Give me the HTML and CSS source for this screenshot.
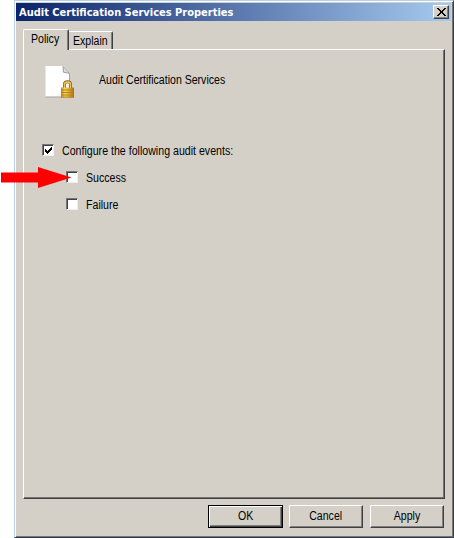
FILE: index.html
```html
<!DOCTYPE html>
<html lang="en">
<head>
<meta charset="utf-8">
<title>Audit Certification Services Properties</title>
<link rel="stylesheet" href="styles.css">
</head>
<body>
<main class="window">
  <header class="titlebar">
    <h1 class="title"><span class="t">Audit Certification Services Properties</span></h1>
    <button class="close" aria-label="Close"><svg width="9" height="8" viewBox="0 0 9 8" shape-rendering="crispEdges"><path d="M0 0h2v1h1v1h1v1h1v-1h1v-1h1v-1h2v1h-1v1h-1v1h-1v2h1v1h1v1h1v1h-2v-1h-1v-1h-1v-1h-1v1h-1v1h-1v1h-2v-1h1v-1h1v-1h1v-2h-1v-1h-1v-1h-1z"/></svg></button>
  </header>
  <nav class="tabs">
    <div class="tab active"><span class="t">Policy</span></div>
    <div class="tab"><span class="t">Explain</span></div>
  </nav>
  <section class="panel">
    <div class="heading">
      <svg class="icon" width="30" height="33" viewBox="0 0 30 33">
        <defs>
          <linearGradient id="paper" x2="1" y2="1"><stop stop-color="#fff"/><stop offset=".65" stop-color="#fff"/><stop offset="1" stop-color="#e4e4e4"/></linearGradient>
          <linearGradient id="gold"><stop stop-color="#c48a14"/><stop offset=".3" stop-color="#f7d460"/><stop offset=".6" stop-color="#e5ae2e"/><stop offset="1" stop-color="#a87510"/></linearGradient>
        </defs>
        <path d="M.5 0h18l6 6.500v24.500H.5z" fill="url(#paper)"/>
        <path d="M.5 31h17M24.500 8v9" fill="none" stroke="#a5a39e"/>
        <path d="M18 .4l6.700 7-6.200-1.200z" fill="#dedede" stroke="#949494" stroke-width=".9"/>
        <path d="M19.500 22v-3.500q0-2.700 3-2.700t3 2.700V22" fill="none" stroke="#8d6818" stroke-width="3"/>
        <path d="M19.500 22v-3.500q0-2.500 3-2.500t3 2.500V22" fill="none" stroke="#ecc85a" stroke-width="1.300"/>
        <path d="M16 21.500h13v10H16z" fill="url(#gold)"/>
        <path d="M16 24h13M16 26.500h13M16 29h13M16 31.200h13" stroke="#a87412" stroke-width=".8"/>
      </svg>
      <span class="t">Audit Certification Services</span>
    </div>
    <label class="row"><i class="box"><svg width="9" height="9" viewBox="0 0 9 9" shape-rendering="crispEdges"><path d="M1 3h1v1h1v1h1v-1h1v-1h1v-1h1v-1h1v3h-1v1h-1v1h-1v1h-1v1h-1v-1h-1v-1h-1z"/></svg></i><span class="t">Configure the following audit events:</span></label>
    <label class="row child success"><i class="box"></i><span class="t">Success</span></label>
    <label class="row child failure"><i class="box"></i><span class="t">Failure</span></label>
  </section>
  <footer class="actions">
    <button class="btn default"><span class="t">OK</span></button>
    <button class="btn"><span class="t">Cancel</span></button>
    <button class="btn"><span class="t">Apply</span></button>
  </footer>
</main>
<svg class="arrow" width="71" height="22" viewBox="0 0 71 22"><path d="M0 5.500h37V0l33.500 10.500L37 21v-5.500H0z" fill="#f00"/></svg>
</body>
</html>
```
FILE: styles.css
```css
* { box-sizing: border-box; }
body { margin: 0; width: 454px; height: 538px; background: #fff; overflow: hidden; font: 12px/14px "Liberation Sans", Arial, sans-serif; color: #000; }
button { font: inherit; color: inherit; border-radius: 0; }
.t { display: inline-block; white-space: nowrap; transform: scaleX(.88); transform-origin: 0 50%; }
.window {
  margin-left: 14px; width: 440px; height: 538px; background: #d4d0c8; display: flex; flex-direction: column;
  border: 1px solid; border-color: #b5d1ec #34424b #2b3b5a #b5d1ec;
  box-shadow: inset 1px 1px #fff, inset -1px -1px #77746f; padding: 2px 2px 2px 1px;
}
.titlebar { height: 18px; flex: none; padding: 0 2px 0 3px; display: flex; align-items: center; justify-content: space-between; background: linear-gradient(90deg, #0b246a, #a6caf0); }
.title { margin: 0; padding-top: 1px; font: bold 11px/17px "DejaVu Sans Condensed", "DejaVu Sans", sans-serif; color: #fff; }
.title .t { transform: none; }
.close { width: 16px; height: 14px; padding: 0; display: grid; place-items: center; background: #d4d0c8; border: 1px solid; border-color: #fff #404040 #404040 #fff; box-shadow: inset -1px -1px #808080; }
.tabs { height: 28px; flex: none; display: flex; align-items: flex-end; padding-left: 7px; }
.tab { width: 44px; height: 18px; border-top: 1px solid #fff; border-right: 1px solid #404040; box-shadow: inset -1px 0 #808080; border-radius: 0 2px 0 0; padding: 2px 0 0 4px; }
.tab.active { width: 46px; height: 21px; margin-bottom: -1px; border-left: 1px solid #fff; border-radius: 2px 2px 0 0; background: #d4d0c8; z-index: 1; padding: 2px 0 0 7px; }
.panel { margin-left: 7px; width: 422px; height: 450px; flex: none; border: 1px solid; border-color: #fff #404040 #404040 #fff; box-shadow: inset -1px -1px #77746f; padding: 16px 0 0 18px; }
.heading { height: 33px; display: flex; padding-left: 3px; margin-bottom: 44px; }
.heading .t { margin: 7px 0 0 24px; }
.row { height: 14px; display: flex; align-items: center; gap: 8px; }
.row .t { padding-top: 2px; transform: scaleX(.885); }
.child { margin-left: 24px; }
.success { margin-top: 13px; }
.failure { margin-top: 13px; }
.box { width: 12px; height: 12px; flex: none; background: #fff; border: 1px solid; border-color: #777 #eee #eee #777; box-shadow: inset 1px 1px #404040; display: grid; place-items: center; }
.actions { display: flex; gap: 7px; justify-content: flex-end; margin-top: 6px; padding-right: 7px; }
.btn { width: 74px; height: 23px; padding: 0 0 1px; background: #d4d0c8; border: 1px solid; border-color: #fff #404040 #404040 #fff; box-shadow: inset -1px -1px #808080; }
.btn .t { transform-origin: 50% 50%; }
.btn.default { border-color: #000; box-shadow: inset 1px 1px #fff, inset -1px -1px #404040, inset -2px -2px #808080; width: 75px; margin-right: -1px; }
.arrow { position: absolute; left: 1px; top: 167px; }
```
